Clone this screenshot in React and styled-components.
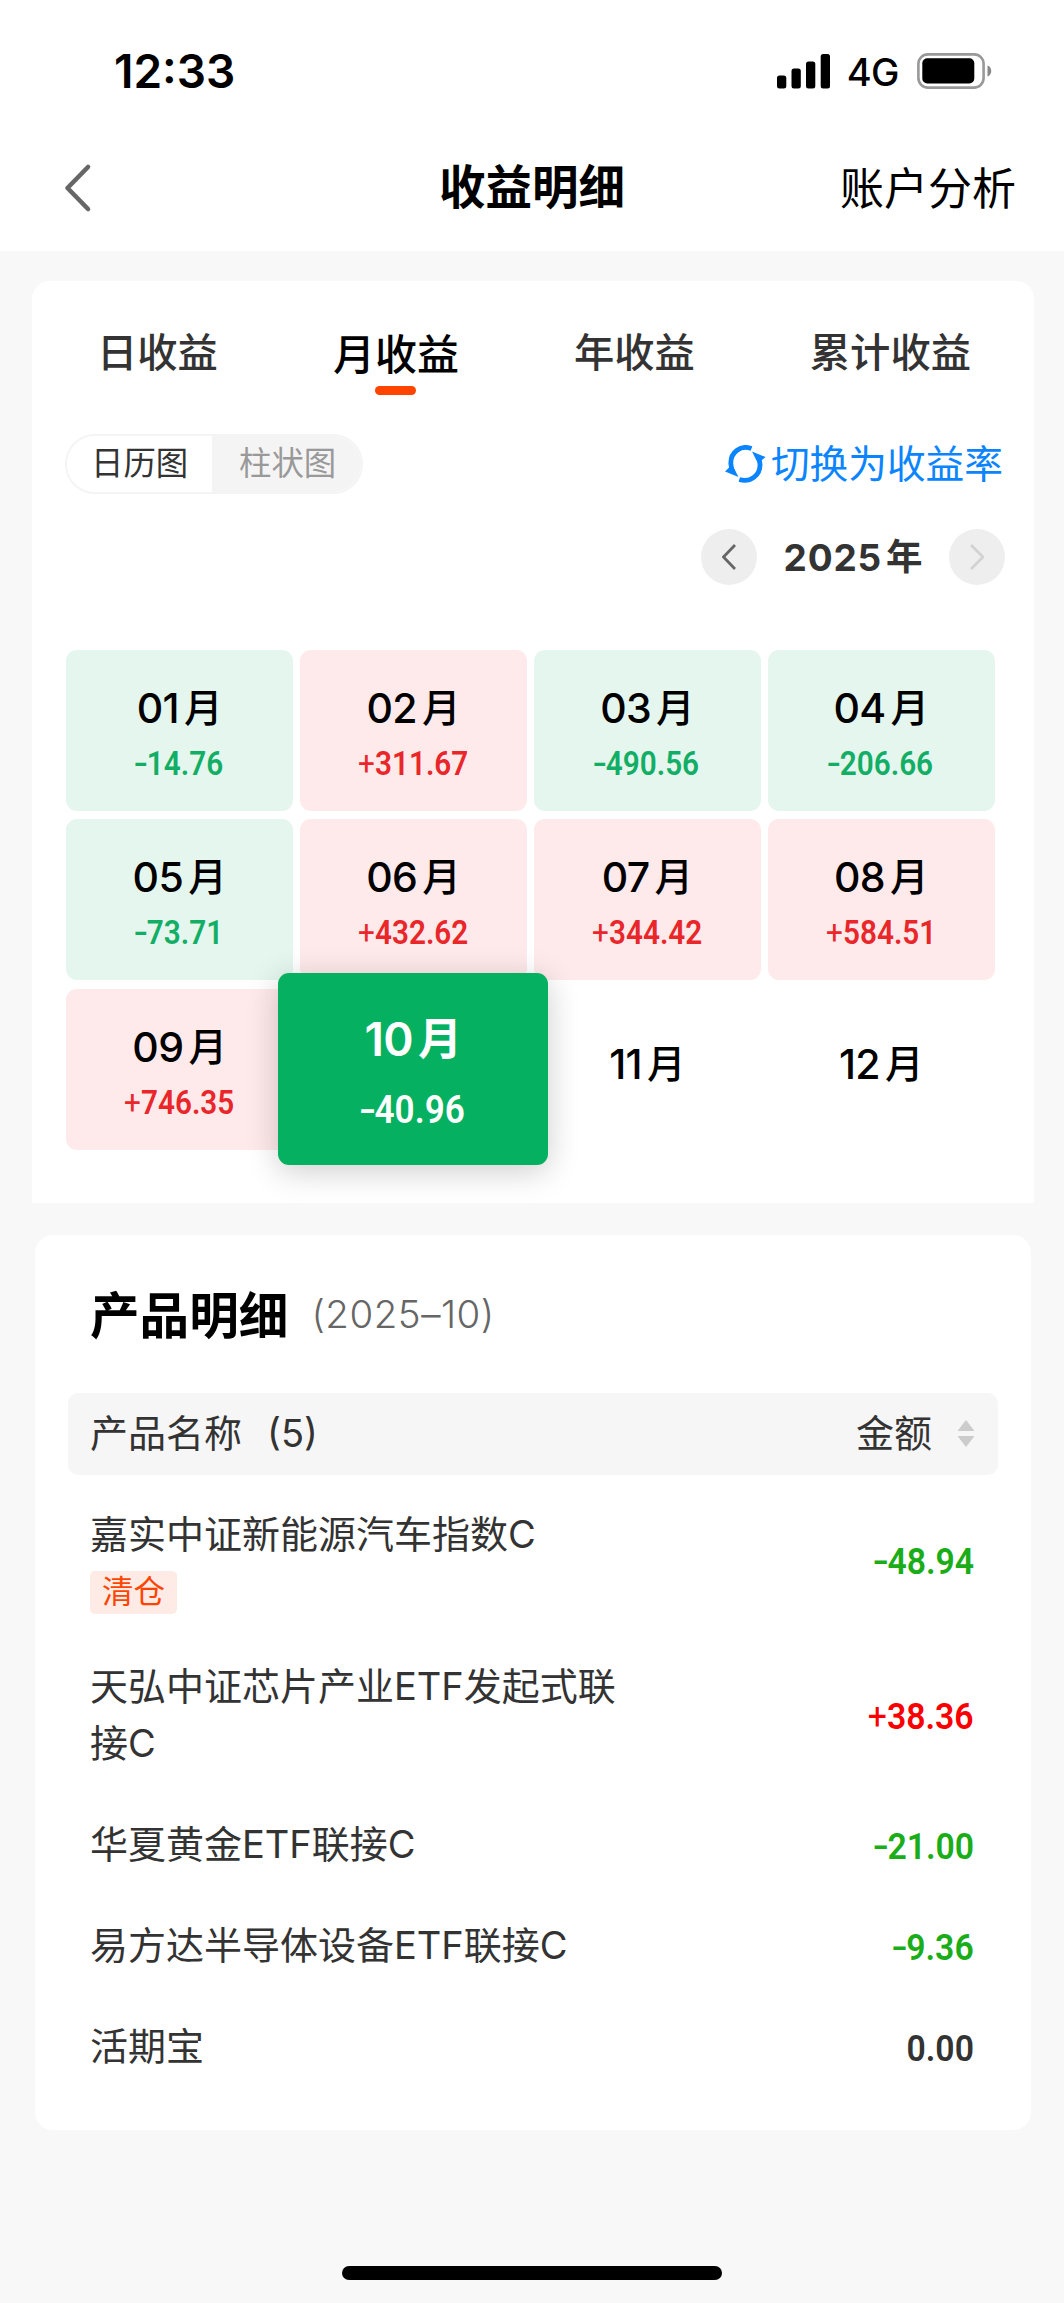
import styled, { createGlobalStyle, css } from "styled-components";

const GlobalStyle = createGlobalStyle`
* {
  box-sizing: border-box;
}
body {
  margin: 0;
  background: #f8f8f8;
  font-family: Inter, "Noto Sans CJK SC", sans-serif;
  color: #333;
}
`

const Screen = styled.div`
display: flex;
flex-direction: column;
width: 1064px;
height: 2303px;
background: #f8f8f8;
`

const Top = styled.header`
height: 251px;
background: #fff;
`

const StatusBar = styled.div`
display: flex;
align-items: center;
justify-content: space-between;
height: 142px;
padding: 0 72px 0 114px;
color: #000;
`

const Time = styled.div`
font-size: 46px;
font-weight: 600;
line-height: 56px;
`

const StatusIcons = styled.div`
display: flex;
align-items: center;
`

const Network = styled.span`
margin: 2px 18px 0 17px;
font-size: 38px;
font-weight: 500;
line-height: 46px;
letter-spacing: -0.5px;
`

const NavBar = styled.div`
display: grid;
grid-template-columns: 1fr auto 1fr;
align-items: center;
height: 92px;
padding: 0 48px 0 64px;
`

const Title = styled.h1`
margin: -2px 16px 0 0;
font-size: 46.5px;
font-weight: 700;
line-height: 60px;
color: #000;
`

const NavLink = styled.a`
justify-self: end;
margin-top: 2px;
font-size: 44px;
line-height: 60px;
color: #000;
`

const ProfitCard = styled.section`
height: 922px;
margin: 30px 30px 0 32px;
padding-top: 33px;
border-radius: 18px 18px 0 0;
background: #fff;
`

const Tabs = styled.div`
display: flex;
justify-content: space-between;
height: 84px;
padding: 0 63px 0 65px;
`

const Tab = styled.div`
display: flex;
flex-direction: column;
align-items: center;
font-size: ${props => props.$active ? "42px" : "40.3px"};
font-weight: 500;
line-height: ${props => props.$active ? "81px" : "78px"};
color: ${props => props.$active ? "#000" : "#333"};
`

const TabLine = styled.div`
width: 41px;
height: 9px;
margin-top: -9px;
border-radius: 5px;
background: #ff4400;
`

const Tools = styled.div`
display: flex;
align-items: center;
justify-content: space-between;
height: 60px;
margin-top: 36px;
padding: 0 31px 0 33px;
`

const Segment = styled.div`
display: flex;
width: 298px;
height: 60px;
border: 2px solid #f4f4f4;
border-radius: 30px;
overflow: hidden;
`

const SegmentItem = styled.div`
width: ${props => props.$active ? "146px" : "150px"};
padding-left: ${props => props.$active ? "24px" : "27px"};
font-size: 32.4px;
line-height: 55px;
color: ${props => props.$active ? "#333" : "#999"};
background: ${props => props.$active ? "#fff" : "#f4f4f4"};
`

const Switch = styled.div`
display: flex;
align-items: center;
gap: 5px;
font-size: 38.7px;
line-height: 55px;
color: #0a84ff;
`

const YearPicker = styled.div`
display: flex;
align-items: center;
justify-content: flex-end;
height: 56px;
margin-top: 35px;
padding-right: 29px;
`

const RoundButton = styled.button`
display: flex;
align-items: center;
justify-content: center;
width: 56px;
height: 56px;
padding: 0;
border: 0;
border-radius: 50%;
background: #eee;
`

const Year = styled.div`
display: flex;
justify-content: center;
gap: 4px;
width: 192px;
font-size: 37px;
font-weight: 700;
line-height: 55px;
letter-spacing: 0.8px;
`

const YearUnit = styled.span`
font-size: 36.5px;
font-weight: 600;
letter-spacing: 0;
`

const Months = styled.div`
display: grid;
grid-template-columns: repeat(4, 226.6px);
grid-auto-rows: 161px;
gap: 8.3px 7.3px;
margin: 65px 0 0 34.3px;
`

const amountFont = css`
font-family: Roboto, sans-serif;
font-weight: 600;
`

const Sign = styled.span`
display: inline-block;
font-weight: ${props => props.$minus ? 500 : 400};
transform: ${props => props.$minus ? "scaleX(1.4)" : "none"};
margin-right: ${props => props.$minus ? "1px" : "0"};
`

const MonthName = styled.div`
display: flex;
gap: 5px;
font-size: 41px;
font-weight: 500;
line-height: 56px;
letter-spacing: -0.6px;
color: #000;
`

const MonthUnit = styled.span`
font-size: 38.5px;
letter-spacing: 0;
`

const MonthAmount = styled.div`
${amountFont}
font-size: 33px;
line-height: 40px;
margin-top: 8px;
transform: scaleX(0.9);
`

const tones = {
  down: css`
    background: #e5f6ee;
    color: #12ae65;
  `,
  up: css`
    background: #ffeaeb;
    color: #e9262a;
  `,
  active: css`
    position: relative;
    z-index: 1;
    margin: -16px -21.5px -15px -22px;
    background: #06b061;
    color: #fff;
    box-shadow: 0 6px 32px rgba(0, 0, 0, 0.2);
    ${MonthName} {
      font-size: 46px;
      font-weight: 600;
      color: #fff;
    }
    ${MonthUnit} {
      font-size: 44px;
    }
    ${MonthAmount} {
      margin-top: 23px;
      font-size: 39px;
    }
  `,
  empty: css`
    padding-bottom: 14px;
    background: #fff;
  `,
}

const Month = styled.div`
display: flex;
flex-direction: column;
align-items: center;
justify-content: center;
padding-top: 3px;
border-radius: 11px;
${props => tones[props.$tone]}
`

const DetailCard = styled.section`
height: 895px;
margin: 32px 33px 0 35px;
padding: 46px 33px 0;
border-radius: 18px;
background: #fff;
`

const DetailHead = styled.div`
display: flex;
align-items: center;
height: 70px;
padding-left: 22px;
`

const DetailTitle = styled.h2`
margin: 0;
font-size: 49.6px;
font-weight: 700;
line-height: 70px;
color: #000;
`

const Period = styled.span`
margin: -4px 0 0 23px;
font-size: 38.5px;
font-weight: 300;
letter-spacing: 0.5px;
color: #666;
`

const TableHead = styled.div`
display: flex;
align-items: center;
justify-content: space-between;
height: 82px;
margin-top: 42px;
padding: 0 23px 0 22px;
border-radius: 10px;
background: #f6f6f6;
font-size: 38px;
line-height: 50px;
`

const HeadText = styled.div`
margin-top: -3px;
`

const Count = styled.span`
margin-left: 25px;
`

const SortLabel = styled.div`
display: flex;
align-items: center;
gap: 25px;
`

const Rows = styled.div`
padding: 9px 24px 0 22px;
`

const Row = styled.div`
display: flex;
align-items: center;
justify-content: space-between;
padding: 22px 0;
`

const Name = styled.div`
width: 530px;
font-size: 38px;
line-height: 57px;
`

const Tag = styled.div`
width: 87px;
height: 43px;
margin-top: 8px;
border-radius: 5px;
background: #ffebe5;
color: #ff4400;
font-size: 31.5px;
line-height: 41px;
text-align: center;
`

const Amount = styled.div`
${amountFont}
font-size: 37.5px;
line-height: 44px;
padding-top: 2px;
transform: scaleX(0.9);
transform-origin: right;
color: ${props => props.$value > 0 ? "#fa0000" : props.$value < 0 ? "#1aad19" : "#333"};
`

const HomeBar = styled.div`
width: 380px;
height: 14px;
margin: auto auto 23px;
border-radius: 7px;
background: #000;
`

const months = [
  { name: "01", amount: "-14.76", tone: "down" },
  { name: "02", amount: "+311.67", tone: "up" },
  { name: "03", amount: "-490.56", tone: "down" },
  { name: "04", amount: "-206.66", tone: "down" },
  { name: "05", amount: "-73.71", tone: "down" },
  { name: "06", amount: "+432.62", tone: "up" },
  { name: "07", amount: "+344.42", tone: "up" },
  { name: "08", amount: "+584.51", tone: "up" },
  { name: "09", amount: "+746.35", tone: "up" },
  { name: "10", amount: "-40.96", tone: "active" },
  { name: "11", tone: "empty" },
  { name: "12", tone: "empty" },
]

const products = [
  { name: "嘉实中证新能源汽车指数C", tag: "清仓", amount: "-48.94" },
  { name: "天弘中证芯片产业ETF发起式联接C", amount: "+38.36" },
  { name: "华夏黄金ETF联接C", amount: "-21.00" },
  { name: "易方达半导体设备ETF联接C", amount: "-9.36" },
  { name: "活期宝", amount: "0.00" },
]

const Signal = () => (
  <svg width="53" height="35" viewBox="0 0 53 35">
    <rect x="0" y="21.5" width="9.3" height="13" rx="2.5" />
    <rect x="14.5" y="14.5" width="9.3" height="20" rx="2.5" />
    <rect x="29" y="7.5" width="9.3" height="27" rx="2.5" />
    <rect x="43.7" y="0" width="9.3" height="34.5" rx="2.5" />
  </svg>
)

const Battery = () => (
  <svg width="75" height="36" viewBox="0 0 75 36">
    <rect x="1.4" y="1.4" width="65.2" height="33.2" rx="9.5" fill="none" stroke="#999" strokeWidth="2.6" />
    <rect x="5.3" y="5.3" width="52" height="25.2" rx="5" />
    <path d="M70.5 12.5c5 1.5 5 9.5 0 11z" fill="#888" />
  </svg>
)

const BackIcon = () => (
  <svg width="28" height="50" viewBox="0 0 28 50" fill="none" stroke="#666" strokeWidth="4.6" strokeLinecap="round" strokeLinejoin="round">
    <path d="M24 4 3.5 25 24 46" />
  </svg>
)

const SwitchIcon = () => (
  <svg width="41" height="38" viewBox="0 0 41 38">
    <g fill="none" stroke="#0a84ff" strokeWidth="4.8">
      <path d="M26.5 3.6C16-.5 5.5 7 5.8 18.5C5.9 22 6.5 24.5 8.5 27.5" />
      <path d="M14.3 34.5C25 38 35.5 30.5 35 19C34.9 16 34.2 13.5 33 11.5" />
    </g>
    <path d="M27 6.5 40.5 12 33 18.5zM13.5 32 0 26.5 7 19.5z" fill="#0a84ff" />
  </svg>
)

const Arrow = ({ flip, color }) => (
  <svg width="14" height="26" viewBox="0 0 14 26" fill="none" stroke={color} strokeWidth="2.8">
    <path d={flip ? "M1 1 13 13 1 25" : "M13 1 1.5 13 13 25"} />
  </svg>
)

const SortIcon = () => (
  <svg width="18" height="28" viewBox="0 0 18 28" fill="#ccc">
    <path d="M9 0 17.5 11H.5zM9 27 17.5 16H.5z" />
  </svg>
)

// The sign is drawn apart from the digits, with its own width and weight
const signed = amount => {
  if (!/^[+-]/.test(amount)) return amount
  return (
    <>
      <Sign $minus={amount[0] === "-"}>{amount[0]}</Sign>
      {amount.slice(1)}
    </>
  )
}

function App() {
  return (
    <Screen>
      <GlobalStyle />
      <Top>
        <StatusBar>
          <Time>12:33</Time>
          <StatusIcons>
            <Signal />
            <Network>4G</Network>
            <Battery />
          </StatusIcons>
        </StatusBar>
        <NavBar>
          <BackIcon />
          <Title>收益明细</Title>
          <NavLink>账户分析</NavLink>
        </NavBar>
      </Top>

      <ProfitCard>
        <Tabs>
          <Tab>日收益</Tab>
          <Tab $active>
            月收益
            <TabLine />
          </Tab>
          <Tab>年收益</Tab>
          <Tab>累计收益</Tab>
        </Tabs>
        <Tools>
          <Segment>
            <SegmentItem $active>日历图</SegmentItem>
            <SegmentItem>柱状图</SegmentItem>
          </Segment>
          <Switch>
            <SwitchIcon />
            <span>切换为收益率</span>
          </Switch>
        </Tools>
        <YearPicker>
          <RoundButton><Arrow color="#666" /></RoundButton>
          <Year>2025<YearUnit>年</YearUnit></Year>
          <RoundButton><Arrow flip color="#d2d2d2" /></RoundButton>
        </YearPicker>
        <Months>
          {months.map(month => (
            <Month key={month.name} $tone={month.tone}>
              <MonthName>{month.name}<MonthUnit>月</MonthUnit></MonthName>
              {month.amount && <MonthAmount>{signed(month.amount)}</MonthAmount>}
            </Month>
          ))}
        </Months>
      </ProfitCard>

      <DetailCard>
        <DetailHead>
          <DetailTitle>产品明细</DetailTitle>
          <Period>(2025–10)</Period>
        </DetailHead>
        <TableHead>
          <HeadText>产品名称<Count>(5)</Count></HeadText>
          <SortLabel><HeadText>金额</HeadText><SortIcon /></SortLabel>
        </TableHead>
        <Rows>
          {products.map(product => (
            <Row key={product.name}>
              <Name>
                {product.name}
                {product.tag && <Tag>{product.tag}</Tag>}
              </Name>
              <Amount $value={Number(product.amount)}>{signed(product.amount)}</Amount>
            </Row>
          ))}
        </Rows>
      </DetailCard>
      <HomeBar />
    </Screen>
  )
}

export default App;
